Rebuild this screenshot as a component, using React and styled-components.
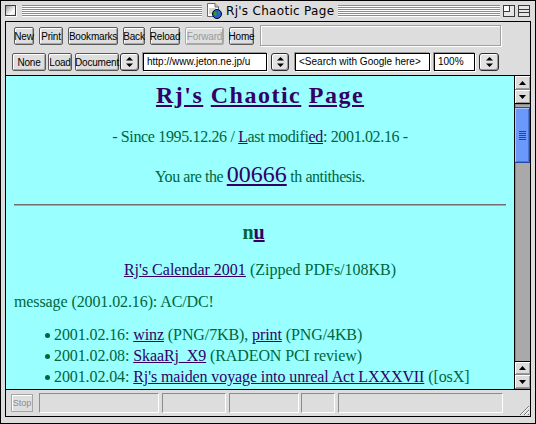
import React from 'react';
import styled, { createGlobalStyle } from 'styled-components';

const Global = createGlobalStyle`
  html, body { margin: 0; padding: 0; background: #fff; }
  * { box-sizing: border-box; }
`;

/* window frame */
const Window = styled.div`
  width: 536px;
  height: 424px;
  border: 1px solid #000;
  background: #dddddd;
  display: flex;
  flex-direction: column;
  padding: 0 4px 6px 4px;
  font-family: "Liberation Sans", Arial, sans-serif;
`;

const TitleBar = styled.div`
  height: 19px;
  margin: 0 -4px 1px;
  padding: 0 5px 0 4px;
  display: flex;
  align-items: center;
`;

const Stripes = styled.div`
  flex: ${p => (p.$w ? `0 0 ${p.$w}px` : '1')};
  height: 12px;
  background: repeating-linear-gradient(to bottom, #8c8c8c 0 1px, #ffffff 1px 2px);
`;

const CloseBox = styled.div`
  width: 11px;
  height: 11px;
  margin-right: 6px;
  border: 1px solid #3c3c3c;
  background: linear-gradient(135deg, #9a9a9a 0%, #ffffff 70%, #e0e0e0 100%);
  box-shadow: 1px 1px 0 #fff;
`;

const WidgetBox = styled.div`
  width: 12px;
  height: 12px;
  margin-left: ${p => p.$gap}px;
  display: flex;
`;

const TitleGroup = styled.div`
  display: flex;
  align-items: center;
  gap: 4px;
  padding: 0 4px;
`;

const TitleText = styled.span`
  font-family: "DejaVu Sans", Verdana, sans-serif;
  font-size: 12px;
  letter-spacing: 0.3px;
  color: #000;
  white-space: nowrap;
`;

const Inner = styled.div`
  flex: 1;
  border: 1px solid #000;
  display: flex;
  flex-direction: column;
  min-height: 0;
`;

/* toolbars */
const ToolRow = styled.div`
  height: ${p => p.$h}px;
  display: flex;
  align-items: flex-start;
  padding: ${p => p.$pt}px 0 0 ${p => p.$pl}px;
  gap: ${p => p.$gap || 0}px;
`;

const Button = styled.div`
  width: ${p => p.$w}px;
  height: 18px;
  flex: none;
  margin-left: ${p => p.$ml || 0}px;
  border: 1px solid ${p => (p.$off ? '#a8a8a8' : '#5a5a5a')};
  border-radius: 2px;
  background: #dedede;
  box-shadow: inset 1px 1px 0 #fff, inset -1px -1px 0 #a6a6a6;
  display: flex;
  align-items: center;
  justify-content: center;
  font-size: 10px;
  letter-spacing: -0.2px;
  color: ${p => (p.$off ? '#9a9a9a' : '#000')};
  white-space: nowrap;
`;

const InfoField = styled.div`
  width: 241px;
  height: 21px;
  margin-top: -2px;
  margin-left: 1px;
  border: 1px solid #a0a0a0;
  box-shadow: 1px 1px 0 #fff, inset 1px 1px 0 #fff;
`;

const PopupButton = styled.div`
  width: ${p => p.$w}px;
  height: 18px;
  flex: none;
  margin-left: ${p => p.$ml || 0}px;
  border: 1px solid #2c2c2c;
  border-radius: 3px;
  background: #e2e2e2;
  box-shadow: inset 1px 1px 0 #fff, inset -1px -1px 0 #999;
  display: flex;
  align-items: center;
  justify-content: center;
`;

const Field = styled.div`
  width: ${p => p.$w}px;
  height: 18px;
  flex: none;
  margin-left: ${p => p.$ml || 0}px;
  border: 1px solid #000;
  background: #fff;
  box-shadow: -1px -1px 0 #999, 1px 1px 0 #fff;
  font-size: 10px;
  line-height: 16px;
  padding-left: 3px;
  color: #000;
  white-space: nowrap;
  overflow: hidden;
`;

/* page area */
const Main = styled.div`
  height: 315px;
  border-top: 1px solid #000;
  border-bottom: 1px solid #000;
  display: flex;
`;

const Content = styled.div`
  flex: 1;
  min-width: 0;
  background: #99ffff;
  overflow: hidden;
  padding: 4px 8px 0;
  color: #006640;
  font-family: "Liberation Serif", "Times New Roman", serif;
  font-size: 16px;
  line-height: 21px;
`;

const A = styled.a`
  color: #330066;
  text-decoration: underline;
  cursor: pointer;
`;

const Heading = styled.h1`
  margin: 0;
  font-size: 24px;
  font-weight: bold;
  line-height: 30px;
  letter-spacing: 1.5px;
  text-align: center;
`;

const Line = styled.p`
  margin: ${p => p.$mt}px 0 0;
  text-align: ${p => (p.$left ? 'left' : 'center')};
  letter-spacing: ${p => p.$ls || 0}px;
  white-space: nowrap;
`;

const Counter = styled.p`
  margin: 16px 0 0;
  line-height: 28px;
  letter-spacing: -0.45px;
  text-align: center;
`;

const Big = styled(A)`
  font-size: 24px;
  line-height: 0;
  letter-spacing: 0;
`;

const Rule = styled.hr`
  margin: 13px 0 0;
  height: 0;
  border: none;
  border-top: 1px solid #7d6a6a;
  border-bottom: 1px solid #b3a3a3;
`;

const Sub = styled.h3`
  margin: 14px 0 0;
  padding-right: 13px;
  font-size: 20px;
  line-height: 24px;
  font-weight: bold;
  text-align: center;
`;

const List = styled.ul`
  margin: 12px 0 0;
  padding-left: 40px;
  list-style: none;
`;

const Item = styled.li`
  position: relative;
  letter-spacing: -0.1px;
  &::before {
    content: '';
    position: absolute;
    left: -9px;
    top: 9px;
    width: 5px;
    height: 5px;
    border-radius: 50%;
    background: #006640;
  }
`;

/* scroll bar */
const ScrollBar = styled.div`
  width: 16px;
  flex: none;
  border-left: 1px solid #000;
  display: flex;
  flex-direction: column;
  background: #a9a9a9;
`;

const Arrow = styled.div`
  height: 14px;
  flex: none;
  background: #dcdcdc;
  border-bottom: 1px solid ${p => (p.$last ? '#000' : '#888')};
  border-top: ${p => (p.$first ? '1px solid #000' : 'none')};
  box-shadow: inset 1px 1px 0 #fff, inset -1px -1px 0 #9a9a9a;
  display: flex;
  align-items: center;
  justify-content: center;
`;

const Track = styled.div`
  flex: 1;
  box-shadow: inset 1px 1px 0 #8a8a8a;
  padding-top: ${p => p.$offset}px;
`;

const Thumb = styled.div`
  height: 56px;
  background: #6b98fb;
  border: 1px solid #2748a8;
  border-left: none;
  box-shadow: inset 1px 1px 0 #a9c4ff, inset -1px -1px 0 #4c74d8;
  display: flex;
  align-items: center;
  justify-content: center;
`;

const Grip = styled.div`
  width: 7px;
  height: 9px;
  background: repeating-linear-gradient(to bottom, #2342a8 0 1px, transparent 1px 2px);
`;

/* status bar */
const StatusBar = styled.div`
  flex: 1;
  display: flex;
  align-items: flex-start;
  padding: 3px 0 0 5px;
`;

const StopButton = styled.div`
  width: 22px;
  height: 18px;
  margin-top: 1px;
  border: 1px solid #a6a6a6;
  background: #dedede;
  box-shadow: inset 1px 1px 0 #fff;
  font-size: 9px;
  color: #8c8c8c;
  display: flex;
  align-items: center;
  justify-content: center;
`;

const StatusField = styled.div`
  width: ${p => p.$w}px;
  height: 20px;
  margin-left: ${p => p.$ml}px;
  border-top: 1px solid #8c8c8c;
  border-left: 1px solid #8c8c8c;
  border-right: 1px solid #fff;
  border-bottom: 1px solid #fff;
`;

const ResizeGrip = styled.div`
  margin-left: auto;
  align-self: flex-end;
  width: 14px;
  height: 14px;
  display: flex;
`;

const PopupIcon = () => (
  <svg width="7" height="10" viewBox="0 0 7 10">
    <path d="M3.5 0 L7 3.5 L0 3.5 Z" fill="#000" />
    <path d="M0 6.5 L7 6.5 L3.5 10 Z" fill="#000" />
  </svg>
);

const Tri = ({ down }) => (
  <svg width="7" height="4" viewBox="0 0 7 4">
    {down ? <path d="M0 0 L7 0 L3.5 4 Z" fill="#000" /> : <path d="M3.5 0 L7 4 L0 4 Z" fill="#000" />}
  </svg>
);

const PageIcon = () => (
  <svg width="16" height="16" viewBox="0 0 16 16">
    <path d="M1.5 0.5 H9 L12.5 4 V13.5 H1.5 Z" fill="#fff" stroke="#6a6a6a" />
    <path d="M9 0.5 V4 H12.5" fill="#ccc" stroke="#6a6a6a" />
    <path d="M3 6 H10 M3 8 H10 M3 10 H8" stroke="#aaa" />
    <circle cx="11" cy="11" r="4.5" fill="#1f5fd6" stroke="#000" />
    <path d="M8 9 Q9.5 8 10.5 9.5 Q11.5 11 10 12.5 Q9 13.5 8.2 12 Z M12 8 Q14 8.5 14.5 10.5 Q13 10.5 12.2 9.5 Z" fill="#2f9a2f" />
  </svg>
);

const ZoomIcon = () => (
  <svg width="12" height="12" viewBox="0 0 12 12">
    <rect x="0.5" y="0.5" width="11" height="11" fill="#e6e6e6" stroke="#3a3a3a" />
    <rect x="0.5" y="0.5" width="6" height="6" fill="#fff" stroke="#3a3a3a" />
  </svg>
);

const CollapseIcon = () => (
  <svg width="12" height="12" viewBox="0 0 12 12">
    <rect x="0.5" y="0.5" width="11" height="11" fill="#e6e6e6" stroke="#3a3a3a" />
    <path d="M1 4.5 H11 M1 7.5 H11" stroke="#3a3a3a" />
  </svg>
);

const GripIcon = () => (
  <svg width="14" height="14" viewBox="0 0 14 14">
    <path d="M13 4 L4 13 M13 8 L8 13 M13 12 L12 13" stroke="#777" />
    <path d="M13 5 L5 13 M13 9 L9 13" stroke="#fff" />
  </svg>
);

const navButtons = [
  { label: 'New', w: 20 },
  { label: 'Print', w: 24 },
  { label: 'Bookmarks', w: 50 },
  { label: 'Back', w: 22 },
  { label: 'Reload', w: 30 },
  { label: 'Forward', w: 39, off: true },
  { label: 'Home', w: 25 },
];

const statusFields = [
  { w: 120, ml: 6 },
  { w: 64, ml: 3 },
  { w: 70, ml: 3 },
  { w: 34, ml: 2 },
  { w: 165, ml: 3 },
];

export default function App() {
  return (
    <>
      <Global />
      <Window>
        <TitleBar>
          <CloseBox />
          <Stripes $w={180} />
          <TitleGroup>
            <PageIcon />
            <TitleText>Rj's Chaotic Page</TitleText>
          </TitleGroup>
          <Stripes />
          <WidgetBox $gap={3}><ZoomIcon /></WidgetBox>
          <WidgetBox $gap={3}><CollapseIcon /></WidgetBox>
        </TitleBar>

        <Inner>
          <ToolRow $h={27} $pt={5} $pl={8} $gap={5}>
            {navButtons.map(b => (
              <Button key={b.label} $w={b.w} $off={b.off}>{b.label}</Button>
            ))}
            <InfoField />
          </ToolRow>
          <ToolRow $h={26} $pt={4} $pl={6}>
            <Button $w={34}>None</Button>
            <Button $w={24} $ml={2}>Load</Button>
            <Button $w={44} $ml={3}>Document</Button>
            <PopupButton $w={19} $ml={1}><PopupIcon /></PopupButton>
            <Field $w={124} $ml={4}>http://www.jeton.ne.jp/u</Field>
            <PopupButton $w={18} $ml={4}><PopupIcon /></PopupButton>
            <Field $w={135} $ml={6}>&lt;Search with Google here&gt;</Field>
            <Field $w={41} $ml={4}>100%</Field>
            <PopupButton $w={20} $ml={4}><PopupIcon /></PopupButton>
          </ToolRow>

          <Main>
            <Content>
              <Heading>
                <A>Rj's</A> <A>Chaotic</A> <A>Page</A>
              </Heading>
              <Line $mt={16} $ls={-0.35}>
                - Since 1995.12.26 / <A>L</A>ast modifi<A>ed</A>: 2001.02.16 -
              </Line>
              <Counter>
                You are the <Big>00666</Big> th antithesis.
              </Counter>
              <Rule />
              <Sub>n<A>u</A></Sub>
              <Line $mt={15}>
                <A>Rj's Calendar 2001</A> (Zipped PDFs/108KB)
              </Line>
              <Line $mt={11} $left $ls={-0.1}>message (2001.02.16): AC/DC!</Line>
              <List>
                <Item>2001.02.16: <A>winz</A> (PNG/7KB), <A>print</A> (PNG/4KB)</Item>
                <Item>2001.02.08: <A>SkaaRj_X9</A> (RADEON PCI review)</Item>
                <Item>2001.02.04: <A>Rj's maiden voyage into unreal Act LXXXVII</A> ([osX]</Item>
              </List>
            </Content>
            <ScrollBar>
              <Arrow><Tri /></Arrow>
              <Arrow $last><Tri down /></Arrow>
              <Track $offset={3}>
                <Thumb><Grip /></Thumb>
              </Track>
              <Arrow $first><Tri /></Arrow>
              <Arrow><Tri down /></Arrow>
            </ScrollBar>
          </Main>

          <StatusBar>
            <StopButton>Stop</StopButton>
            {statusFields.map((f, i) => (
              <StatusField key={i} $w={f.w} $ml={f.ml} />
            ))}
            <ResizeGrip><GripIcon /></ResizeGrip>
          </StatusBar>
        </Inner>
      </Window>
    </>
  );
}
